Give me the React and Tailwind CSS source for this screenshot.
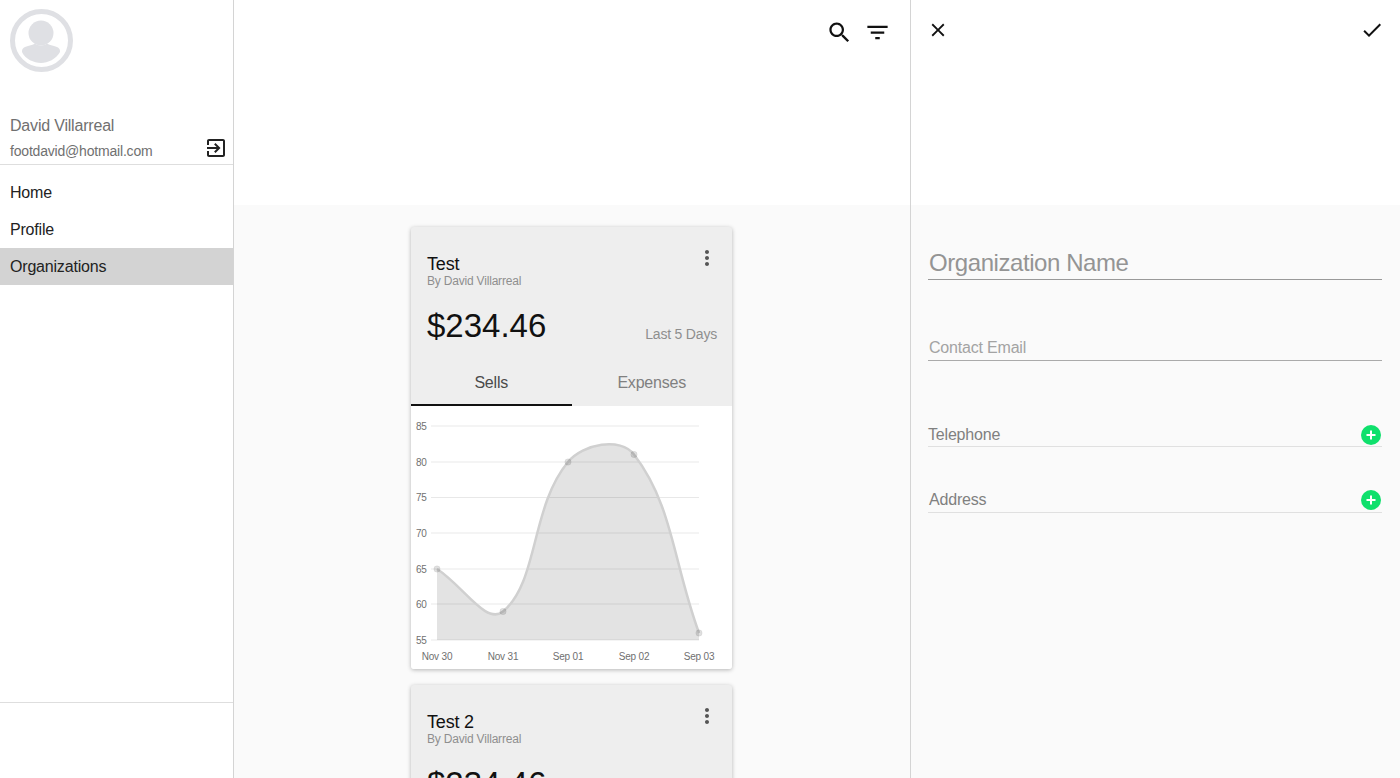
const FONT = 'font-["Liberation_Sans",Arial,sans-serif]';

const MdIcon = ({ d, size = 24, className = '' }) => (
  <svg width={size} height={size} viewBox="0 0 24 24" fill="currentColor" className={`shrink-0 ${className}`}>
    <path d={d} />
  </svg>
);

const ICONS = {
  search: 'M15.5 14h-.79l-.28-.27C15.41 12.59 16 11.11 16 9.5 16 5.91 13.09 3 9.5 3S3 5.91 3 9.5 5.91 16 9.5 16c1.61 0 3.09-.59 4.23-1.57l.27.28v.79l5 4.99L20.49 19l-4.99-5zm-6 0C7.01 14 5 11.99 5 9.5S7.01 5 9.5 5 14 7.01 14 9.5 11.99 14 9.5 14z',
  filter: 'M10 18h4v-2h-4v2zM3 6v2h18V6H3zm3 7h12v-2H6v2z',
  close: 'M19 6.41L17.59 5 12 10.59 6.41 5 5 6.41 10.59 12 5 17.59 6.41 19 12 13.41 17.59 19 19 17.59 13.41 12z',
  check: 'M9 16.17L4.83 12l-1.42 1.41L9 19 21 7l-1.41-1.41z',
  exit: 'M10.09 15.59L11.5 17l5-5-5-5-1.41 1.41L12.67 11H3v2h9.67l-2.58 2.59zM19 3H5c-1.11 0-2 .9-2 2v4h2V5h14v14H5v-4H3v4c0 1.1.89 2 2 2h14c1.1 0 2-.9 2-2V5c0-1.11-.9-2-2-2z',
  more: 'M12 8c1.1 0 2-.9 2-2s-.9-2-2-2-2 .9-2 2 .9 2 2 2zm0 2c-1.1 0-2 .9-2 2s.9 2 2 2 2-.9 2-2-.9-2-2-2zm0 6c-1.1 0-2 .9-2 2s.9 2 2 2 2-.9 2-2-.9-2-2-2z',
};

const Avatar = () => (
  <svg width="63" height="63" viewBox="0 0 63 63">
    <circle cx="31.5" cy="31.5" r="29" fill="none" stroke="#dfe0e4" strokeWidth="5" />
    <circle cx="31" cy="24" r="12.5" fill="#dfe0e4" />
    <path d="M12 42c0-2 1-3 3-4 4-1.500 8-2 10-3.500 2 2.500 10 2.500 12 0 2 1.500 6 2 10 3.500 2 1 3 2 3 4v1c-4 7-12 11-19 11S15 50 12 43z" fill="#dfe0e4" />
  </svg>
);

const Sidebar = () => {
  const links = ['Home', 'Profile', 'Organizations'];
  return (
    <aside className="w-[234px] shrink-0 flex flex-col border-r border-[#d4d4d4] bg-white">
      <div className="pl-[10px] pt-[9px]">
        <Avatar />
      </div>
      <div className="relative mt-[42px] pl-[10px] pb-[3px] border-b border-[#dedede]">
        <p className="text-base leading-6 text-[#707070]">David Villarreal</p>
        <p className="mt-[3px] text-sm leading-5 text-[#707070]">footdavid@hotmail.com</p>
        <MdIcon d={ICONS.exit} className="absolute right-[5px] top-[22px] text-[#222]" />
      </div>
      <nav className="mt-[9px] flex-1">
        {links.map((link) => (
          <div
            key={link}
            className={`h-[37px] pl-[10px] flex items-center text-base text-[#222] ${link === 'Organizations' ? 'bg-[#d3d3d3]' : ''}`}
          >
            {link}
          </div>
        ))}
      </nav>
      <div className="h-[76px] border-t border-[#dedede]" />
    </aside>
  );
};

const points = [
  { x: 26, y: 163, label: 'Nov 30' },
  { x: 92, y: 205.5, label: 'Nov 31' },
  { x: 157, y: 56, label: 'Sep 01' },
  { x: 223, y: 48.5, label: 'Sep 02' },
  { x: 288, y: 227, label: 'Sep 03' },
];
const ticks = [
  { v: 85, y: 20 },
  { v: 80, y: 56 },
  { v: 75, y: 91.5 },
  { v: 70, y: 127 },
  { v: 65, y: 163 },
  { v: 60, y: 198 },
  { v: 55, y: 234 },
];

// same spline chart.js draws, tension .4
const buildCurve = (pts) => {
  const controls = pts.map((p, i) => {
    const prev = pts[i - 1] || p;
    const next = pts[i + 1] || p;
    const d01 = Math.hypot(p.x - prev.x, p.y - prev.y);
    const d12 = Math.hypot(next.x - p.x, next.y - p.y);
    const total = d01 + d12 || 1;
    const fa = (0.4 * d01) / total;
    const fb = (0.4 * d12) / total;
    return {
      c1: [p.x - fa * (next.x - prev.x), p.y - fa * (next.y - prev.y)],
      c2: [p.x + fb * (next.x - prev.x), p.y + fb * (next.y - prev.y)],
    };
  });
  let d = `M${pts[0].x} ${pts[0].y}`;
  for (let i = 1; i < pts.length; i++) {
    d += ` C${controls[i - 1].c2.join(' ')} ${controls[i].c1.join(' ')} ${pts[i].x} ${pts[i].y}`;
  }
  return d;
};

const Chart = () => {
  const curve = buildCurve(points);
  return (
    <svg width="321" height="263" viewBox="0 0 321 263" className="block">
      <path d={`${curve} L288 234 L26 234 Z`} fill="#e3e3e3" />
      {ticks.map((t) => (
        <g key={t.v}>
          <line x1="20" x2="288" y1={t.y} y2={t.y} stroke="#000" strokeOpacity="0.09" />
          <text x="5" y={t.y + 3.500} fontSize="10" fill="#707070">{t.v}</text>
        </g>
      ))}
      <path d={curve} fill="none" stroke="#d0d0d0" strokeWidth="2.500" />
      {points.map((p) => (
        <g key={p.label}>
          <circle cx={p.x} cy={p.y} r="3.200" fill="#000" fillOpacity="0.12" stroke="#000" strokeOpacity="0.05" />
          <text x={p.x} y="253.500" fontSize="10" fill="#707070" textAnchor="middle">{p.label}</text>
        </g>
      ))}
    </svg>
  );
};

const OrgCard = ({ name, showChart }) => (
  <div className="w-[321px] rounded-[3px] overflow-hidden bg-[#eeeeee] shadow-[0_1px_4px_rgba(0,0,0,0.28)] shrink-0">
    <div className="pt-[25px] pl-4 pr-[13px] flex justify-between items-start">
      <div>
        <p className="text-lg leading-6 text-[#111]">{name}</p>
        <p className="-mt-[2px] text-xs leading-[14px] text-[#8e8e8e]">By David Villarreal</p>
      </div>
      <MdIcon d={ICONS.more} className="-mt-[6px] text-[#555]" />
    </div>
    <div className="mt-[18px] pl-4 pr-[15px] flex justify-between items-end">
      <span className="text-[33px] leading-10 tracking-normal text-[#111]">$234.46</span>
      <span className="pb-[2px] text-sm leading-5 text-[#8e8e8e]">Last 5 Days</span>
    </div>
    <div className="mt-[14px] h-[46px] flex text-base">
      <div className="flex-1 pt-[2px] flex items-center justify-center border-b-2 border-[#111] text-[#4a4a4a]">Sells</div>
      <div className="flex-1 flex items-center justify-center text-[#808080]">Expenses</div>
    </div>
    {showChart && (
      <div className="bg-white">
        <Chart />
      </div>
    )}
  </div>
);

const Field = ({ label, className, plus }) => (
  <div className={`flex items-center justify-between ${className}`}>
    <span>{label}</span>
    {plus && (
      <span className="w-5 h-5 mr-px rounded-full bg-[#0fe06c] flex items-center justify-center">
        <svg width="12" height="12" viewBox="0 0 12 12">
          <path d="M6 1.500v9M1.500 6h9" stroke="#fff" strokeWidth="2" />
        </svg>
      </span>
    )}
  </div>
);

export default function App() {
  return (
    <div className={`h-[778px] w-[1400px] overflow-hidden flex bg-white tracking-[-0.012em] ${FONT}`}>
      <Sidebar />

      <main className="w-[677px] shrink-0 flex flex-col border-r border-[#d4d4d4]">
        <div className="h-[205px] shrink-0 bg-white flex justify-end items-start pt-[19px] pr-[19px] gap-[11px] text-[#111]">
          <MdIcon d={ICONS.search} size={27} />
          <MdIcon d={ICONS.filter} size={27} />
        </div>
        <div className="flex-1 min-h-0 overflow-hidden bg-[#fafafa] pt-[22px] pr-px flex flex-col items-center gap-4">
          <OrgCard name="Test" showChart />
          <OrgCard name="Test 2" />
        </div>
      </main>

      <section className="flex-1 flex flex-col">
        <div className="h-[205px] shrink-0 bg-white flex justify-between items-start pt-[18px] pl-[16px] pr-[16px] text-[#111]">
          <MdIcon d={ICONS.close} size={22} className="mt-px" />
          <MdIcon d={ICONS.check} />
        </div>
        <div className="flex-1 bg-[#fafafa] pl-[17px] pr-[18px] pt-[42px]">
          <Field label="Organization Name" className="h-[33px] pl-px text-2xl tracking-[-0.018em] text-[#949494] border-b border-[#999]" />
          <Field label="Contact Email" className="mt-[56px] h-[25px] pl-px text-base text-[#a3a3a3] border-b border-[#aaa]" />
          <Field label="Telephone" className="mt-[61px] h-[25px] pt-[2px] text-base text-[#808080] border-b border-[#e0e0e0]" plus />
          <Field label="Address" className="mt-[41px] h-[25px] pl-px text-base text-[#808080] border-b border-[#e0e0e0]" plus />
        </div>
      </section>
    </div>
  );
}
